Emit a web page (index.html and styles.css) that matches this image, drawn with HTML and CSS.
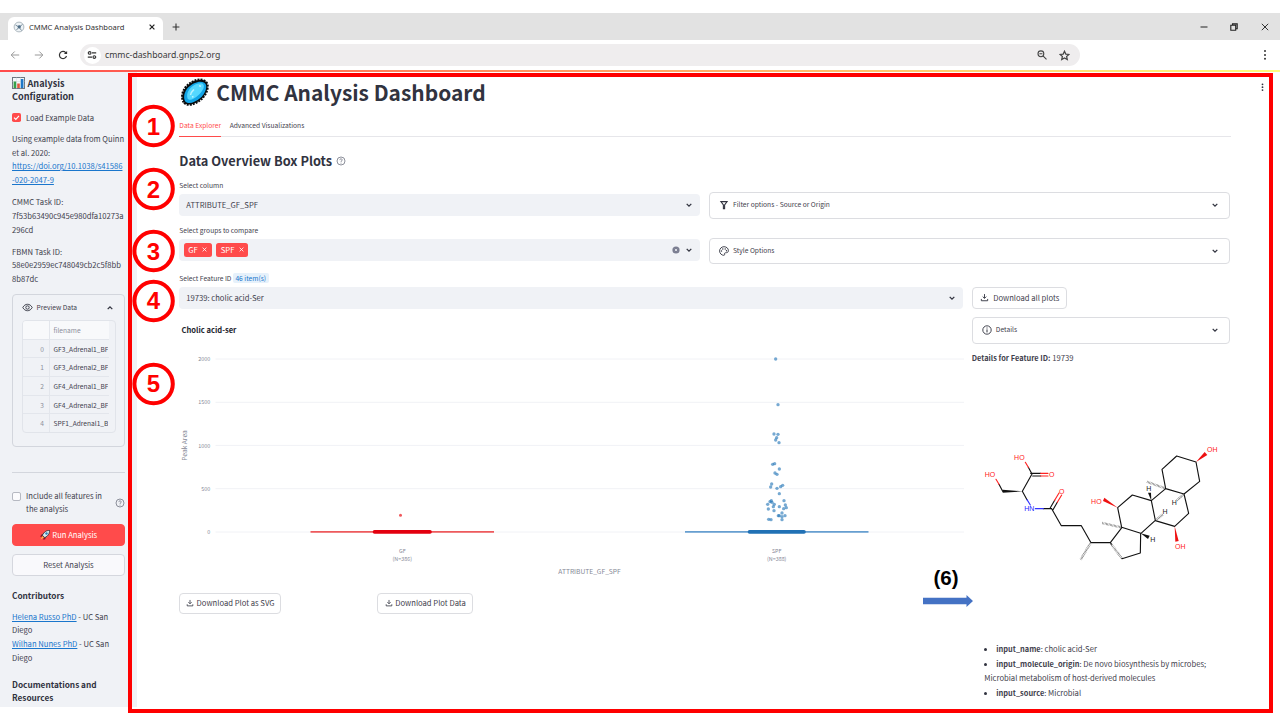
FILE: index.html
```html
<!DOCTYPE html>
<html lang="en">
<head>
<meta charset="utf-8">
<title>CMMC Analysis Dashboard</title>
<link rel="stylesheet" href="styles.css">
</head>
<body>
<svg class="defs" width="0" height="0">
  <symbol id="chev" viewBox="0 0 8 8"><path d="M1.7 2.9 4 5.2 6.3 2.9" fill="none" stroke="#31333f" stroke-width="1.3"/></symbol>
  <symbol id="dl" viewBox="0 0 10 10"><path d="M5 1.200v4.500M3 4 5 6l2-2M1.500 6.600v2h7v-2" fill="none" stroke="#31333f" stroke-width="1"/></symbol>
  <symbol id="help" viewBox="0 0 10 10"><circle cx="5" cy="5" r="4" fill="none" stroke="#808390" stroke-width=".9"/><path d="M3.8 4.1c0-1.7 2.5-1.6 2.4-.1C6.1 4.9 5 4.900 5 5.900M5 6.700v.9" fill="none" stroke="#808390" stroke-width=".9"/></symbol>
</svg>

<header class="tabstrip">
  <div class="tab">
    <svg class="favicon" width="12" height="12" viewBox="0 0 12 12"><circle cx="6" cy="6" r="4.900" fill="#eef3f6" stroke="#9fabb2" stroke-width=".8"/><circle cx="6.200" cy="5.800" r="1.600" fill="#2e5578"/><path d="M6 6 2.500 4M6 6l3.500-2.500M6 6l2.500 3.500M6 6 3.500 9" stroke="#60788a" stroke-width=".8"/></svg>
    <span class="tab-title">CMMC Analysis Dashboard</span>
    <svg class="tab-x" width="8" height="8" viewBox="0 0 8 8"><path d="m1.600 1.600 4.800 4.800m0-4.800L1.600 6.400" stroke="#222" stroke-width="1.200"/></svg>
  </div>
  <svg class="tab-new" width="8" height="8" viewBox="0 0 8 8"><path d="M4 .6v6.800M.6 4h6.800" stroke="#333" stroke-width="1.100"/></svg>
  <div class="win">
    <svg width="8" height="8" viewBox="0 0 8 8"><path d="M.5 4h7" stroke="#333" stroke-width="1.100"/></svg>
    <svg width="8" height="8" viewBox="0 0 8 8"><path d="M.8 2.300h4.900v4.900H.8zM2.500 2.200V.9h4.700v4.800H5.800" fill="none" stroke="#222" stroke-width="1.100"/></svg>
    <svg width="8" height="8" viewBox="0 0 8 8"><path d="m.8.8 6.400 6.400m0-6.400L.8 7.200" stroke="#333" stroke-width="1"/></svg>
  </div>
</header>
<div class="toolbar">
  <svg width="10" height="10" viewBox="0 0 10 10"><path d="M9.200 5H1.400M4.700 1.500 1.200 5l3.500 3.500" fill="none" stroke="#999" stroke-width="1"/></svg>
  <svg width="10" height="10" viewBox="0 0 10 10"><path d="M.8 5h7.800M5.300 1.500 8.800 5 5.300 8.500" fill="none" stroke="#999" stroke-width="1"/></svg>
  <svg width="10" height="10" viewBox="0 0 10 10"><path d="M8.500 6A3.600 3.600 0 1 1 7.700 2.600L8.600 3.500" fill="none" stroke="#333" stroke-width="1.200"/><path d="M9.100.9v3.200H5.900z" fill="#333"/></svg>
  <div class="url">
    <span class="site"><svg width="10" height="10" viewBox="0 0 10 10"><path d="M5 2.900h4.200M.8 7.100H5M.8 2.900h.5M8.700 7.100h.5" stroke="#333" stroke-width="1.200"/><circle cx="2.700" cy="2.900" r="1.300" fill="none" stroke="#333" stroke-width="1.100"/><circle cx="7.300" cy="7.100" r="1.300" fill="none" stroke="#333" stroke-width="1.100"/></svg></span>
    <span class="addr">cmmc-dashboard.gnps2.org</span>
    <svg class="mag" width="10" height="10" viewBox="0 0 10 10"><circle cx="3.900" cy="3.800" r="2.900" fill="none" stroke="#444" stroke-width="1.100"/><path d="M2.400 3.800h3M6 5.900l3.500 3.500" stroke="#444" stroke-width="1.100"/></svg>
    <svg width="11" height="11" viewBox="0 0 11 11"><path d="m5.500 1.200 1.300 2.900 3.200.3-2.400 2.100.7 3.100-2.800-1.600-2.800 1.600.7-3.100L1 4.400l3.200-.3z" fill="none" stroke="#444" stroke-width="1.200"/></svg>
  </div>
  <svg class="menu" width="4" height="12" viewBox="0 0 4 12"><circle cx="2" cy="2" r="1" fill="#333"/><circle cx="2" cy="5.900" r="1" fill="#333"/><circle cx="2" cy="9.800" r="1" fill="#333"/></svg>
</div>
<div class="rainbow"></div>

<div class="app">
  <aside class="side">
    <h3 class="conf"><svg width="13" height="12" viewBox="0 0 13 12"><rect x=".5" y=".5" width="12" height="11" fill="#f4f7f9" stroke="#6d7780"/><path d="M.5 4.500h12M.5 8h12M4.500.5v11M8.500.5v11" stroke="#cfd8dd" stroke-width=".5"/><path fill="#35a04a" d="M1.600 4.500h2.600V11H1.600z"/><path fill="#e2543c" d="M5.200 6.500h2.600V11H5.200z"/><path fill="#1e78c8" d="M8.800 2h2.600v9H8.800z"/></svg>Analysis<br>Configuration</h3>
    <label class="check"><svg width="9" height="9" viewBox="0 0 9 9"><rect width="9" height="9" rx="1.800" fill="#ff4b4b"/><path d="m2 4.600 1.800 1.700L7 2.900" fill="none" stroke="#fff" stroke-width="1.200"/></svg>Load Example Data</label>
    <p class="using">Using example data from Quinn<br>et al. 2020:<br><a>https://doi.org/10.1038/s41586<br>-020-2047-9</a></p>
    <p>CMMC Task ID:<br>7f53b63490c945e980dfa10273a<br>296cd</p>
    <p>FBMN Task ID:<br>58e0e2959ec748049cb2c5f8bb<br>8b87dc</p>
    <section class="preview">
      <div class="preview-head"><svg width="11" height="9" viewBox="0 0 11 9"><path d="M.8 4.500C3 .2 8 .2 10.200 4.500 8 8.800 3 8.800.8 4.500z" fill="none" stroke="#31333f" stroke-width=".9"/><circle cx="5.500" cy="4.500" r="1.700" fill="none" stroke="#31333f" stroke-width=".9"/></svg><span>Preview Data</span><svg class="up" width="8" height="8"><use href="#chev"/></svg></div>
      <div class="table">
        <div class="tr th"><b></b><i>filename</i></div>
        <div class="tr"><b>0</b><i>GF3_Adrenal1_BF</i></div>
        <div class="tr"><b>1</b><i>GF3_Adrenal2_BF</i></div>
        <div class="tr"><b>2</b><i>GF4_Adrenal1_BF</i></div>
        <div class="tr"><b>3</b><i>GF4_Adrenal2_BF</i></div>
        <div class="tr"><b>4</b><i>SPF1_Adrenal1_B</i></div>
      </div>
    </section>
    <hr>
    <div class="include"><span class="box"></span><span>Include all features in<br>the analysis</span><svg width="10" height="10"><use href="#help"/></svg></div>
    <button class="run"><svg width="10" height="10" viewBox="0 0 10 10"><path d="M3.200 4 1 4.800.3 7l2.200-.4zM5.800 6.800l-.5 2.400L3.300 9.800l.200-2.500z" fill="#8a1622"/><path d="M9.600.4C6.500.4 4.500 1.500 2.300 5.200L4.800 7.700C8.500 5.500 9.600 3.500 9.600.4z" fill="#dbe8ee" stroke="#1d2930" stroke-width=".8"/><circle cx="6.500" cy="3.500" r="1.200" fill="#2a83b8"/><path d="m2.600 6.200 1.200 1.200L.6 9.400z" fill="#ffc83d"/></svg>Run Analysis</button>
    <button class="reset">Reset Analysis</button>
    <h4>Contributors</h4>
    <p class="people"><a>Helena Russo PhD</a> - UC San<br>Diego<br><a>Wilhan Nunes PhD</a> - UC San<br>Diego</p>
    <h4 class="docs">Documentations and<br>Resources</h4>
  </aside>

  <main class="main">
    <h1><svg width="28" height="28" viewBox="0 0 28 28"><path d="M3 24.300C0 20 1 12.500 6.500 7.500S19.500 0 24.300 3.300c4.500 3.700 1.500 12.700-4 17.700S6.500 28.800 3 24.300z" fill="#0a0d0f" stroke="#0a0d0f" stroke-width="2.600" stroke-dasharray="1.900 1.100"/><path d="M4 23C2 19 3.500 13 7.700 9S19 2 23.300 4.700s1 10.800-4 15.300S6.500 27 4 23z" fill="#12a4e6"/><path d="M6.500 20.500C5 15.500 8 11 11.500 8.300S21 4 22.500 6.700 21 14 17 17.500 8.500 23.500 6.500 20.500z" fill="#55d8ff"/><path d="M9.500 17c0-2.500 2-4 3.500-5.500M18 7.800l2 .4M11 19l1.500-.5" stroke="#b9f2ff" stroke-width="1.500" fill="none"/></svg>CMMC Analysis Dashboard</h1>
    <nav class="tabs"><span class="on">Data Explorer</span><span>Advanced Visualizations</span></nav>
    <h2>Data Overview Box Plots<svg width="10" height="10"><use href="#help"/></svg></h2>

    <div class="halves">
      <div>
        <div class="label">Select column</div>
        <div class="select"><span>ATTRIBUTE_GF_SPF</span><svg width="8" height="8"><use href="#chev"/></svg></div>
        <div class="label second">Select groups to compare</div>
        <div class="select chips"><span class="chip">GF<svg width="5" height="5" viewBox="0 0 5 5"><path d="m.6.6 3.800 3.800m0-3.800L.6 4.400" stroke="#fff" stroke-width=".8"/></svg></span><span class="chip">SPF<svg width="5" height="5" viewBox="0 0 5 5"><path d="m.6.6 3.800 3.800m0-3.800L.6 4.400" stroke="#fff" stroke-width=".8"/></svg></span><svg class="clear" width="8" height="8" viewBox="0 0 8 8"><circle cx="4" cy="4" r="3.600" fill="#7b7e91"/><path d="m2.900 2.900 2.200 2.200m0-2.200L2.900 5.100" stroke="#f0f2f6" stroke-width=".8"/></svg><svg width="8" height="8"><use href="#chev"/></svg></div>
      </div>
      <div class="exps">
        <div class="exp"><svg width="10" height="10" viewBox="0 0 10 10"><path d="M1.900 1.600h6.200L5.600 5v3.600H4.400V5z" fill="none" stroke="#31333f" stroke-width="1.100"/></svg><span>Filter options - Source or Origin</span><svg class="end" width="8" height="8"><use href="#chev"/></svg></div>
        <div class="exp"><svg width="10" height="10" viewBox="0 0 10 10"><path d="M5 .7C2.500.7.6 2.600.6 5s2 4.300 4.200 4.300c1.300 0 .6-1.300.8-2 .3-1.200 3.800.4 3.800-2.700C9.400 2.300 7.400.7 5 .7z" fill="none" stroke="#31333f" stroke-width=".9"/><g fill="#31333f"><circle cx="2.500" cy="5" r=".7"/><circle cx="3.800" cy="3" r=".7"/><circle cx="6.200" cy="3" r=".7"/><circle cx="7.500" cy="4.800" r=".7"/></g></svg><span>Style Options</span><svg class="end" width="8" height="8"><use href="#chev"/></svg></div>
      </div>
    </div>

    <div class="label feature">Select Feature ID <em>46 item(s)</em></div>
    <div class="cols">
      <div class="left">
        <div class="select"><span>19739: cholic acid-Ser</span><svg width="8" height="8"><use href="#chev"/></svg></div>
        <svg class="chart" width="785" height="275" viewBox="179 315 785 275">
          <g stroke="#f1f2f6" stroke-width="1"><path d="M215.500 359H964M215.500 402.300H964M215.500 445.400H964M215.500 488.700H964M215.500 532H964"/></g>
          <text class="ct" x="181.500" y="333">Cholic acid-ser</text>
          <g class="ax" text-anchor="end"><text x="210.300" y="361.200">2000</text><text x="210.300" y="404.200">1500</text><text x="210.300" y="447.500">1000</text><text x="210.300" y="490.700">500</text><text x="210.300" y="534">0</text></g>
          <g class="ax" text-anchor="middle"><text x="402.300" y="552.700">GF</text><text x="402.300" y="560.800">(N=386)</text><text x="776.700" y="552.700">SPF</text><text x="776.700" y="560.800">(N=388)</text></g>
          <text class="at" text-anchor="middle" x="589.500" y="574.200">ATTRIBUTE_GF_SPF</text>
          <text class="at pk" text-anchor="middle" transform="translate(187 445.500) rotate(-90)">Peak Area</text>
          <path d="M310.500 531.900H494" stroke="#ee5a5c" stroke-width="1.700"/><path d="M374.500 531.900H430" stroke="#e3000f" stroke-width="3.600" stroke-linecap="round"/>
          <circle cx="400.500" cy="515.200" r="1.500" fill="#f0585c"/>
          <path d="M685 531.900H868.500" stroke="#679fd0" stroke-width="1.700"/><path d="M749.500 531.900H804" stroke="#2171b5" stroke-width="3.600" stroke-linecap="round"/>
          <g id="dots" transform="translate(640 340) scale(.33333)" fill="#2878b8" fill-opacity=".64"></g>
        </svg>
        <div class="dls"><button class="btn"><svg width="8" height="8"><use href="#dl"/></svg>Download Plot as SVG</button><button class="btn"><svg width="8" height="8"><use href="#dl"/></svg>Download Plot Data</button></div>
      </div>
      <div class="right">
        <button class="btn all"><svg width="9" height="9"><use href="#dl"/></svg>Download all plots</button>
        <div class="exp info"><svg width="10" height="10" viewBox="0 0 10 10"><circle cx="5" cy="5" r="4.200" fill="none" stroke="#31333f" stroke-width=".9"/><path d="M5 4.400v3M5 2.500v1" stroke="#31333f"/></svg><span>Details</span><svg class="end" width="8" height="8"><use href="#chev"/></svg></div>
        <div class="fid"><b>Details for Feature ID:</b> 19739</div>
        <svg class="mol" width="260" height="150" viewBox="0 0 780 450">
          <g fill="none" stroke="#111" stroke-width="3.400" stroke-linecap="round" stroke-linejoin="round">
            <path d="m157 184 29-52M182 130h30M188 138h24M186 132l-11-20M98 184l-11-21M157 184l14 25M220 236h25M241 233l13-22M249 239l13-22M245 236l29 51h60l29 51h58l35-46M421 338l35 48 55-17 1-59-57-18-12-59 44-38 57 17 12 59-43 39M544 212l43-36 55 16 14 58-42 39-58-17M587 176l-11-58 44-40 58 18 11 58-47 38"/>
            <g stroke="#f22"><path d="M212 130h22M212 138h22M175 112l-9-15M87 163l-9-15M254 211l13-22M262 217l13-22"/></g>
            <path d="m171 209 10 16M196 236h24" stroke="#33f"/>
          </g>
          <path d="M425 344l30 40" stroke="#fff" stroke-width="8"/>
          <g fill="#111"><path d="M157 184l-59-5v9z"/><path d="M544 212l-10-24h9z"/><path d="m512 310 27 7-5 10z"/></g>
          <g fill="#e11"><path d="m443 233-44-20 4-10z"/><path d="m678 96 26-30 8 9z"/><path d="m614 289 2 46 10-2z"/></g>
          <g fill="none" stroke="#555" stroke-width="7" stroke-dasharray="1.500 2.500"><path d="M361 340 332 389M423 342l32 42M453 292l-56-13M585 175l-55-20M640 194l-20 18M558 270l20-16"/></g>
          <g class="atom"><g fill="#f22"><text x="148" y="90">HO</text><text x="60" y="141">HO</text><text x="245" y="142">O</text><text x="275" y="193">O</text><text x="379" y="223">HO</text><text x="727" y="66">OH</text><text x="631" y="356">OH</text></g><text x="178" y="243" fill="#22f">HN</text><g fill="#222"><text x="536" y="184">H</text><text x="585" y="253">H</text><text x="613" y="226">H</text><text x="548" y="335">H</text></g></g>
        </svg>
        <ul class="facts"><li><b>input_name</b>: cholic acid-Ser</li><li><b>input_molecule_origin</b>: De novo biosynthesis by microbes;<br>Microbial metabolism of host-derived molecules</li><li><b>input_source</b>: Microbial</li></ul>
      </div>
    </div>
  </main>
</div>

<svg class="notes" width="1280" height="720" viewBox="0 0 1280 720">
  <g fill="#31333f"><circle cx="1262.500" cy="84.300" r=".9"/><circle cx="1262.500" cy="87.200" r=".9"/><circle cx="1262.500" cy="90.100" r=".9"/></g>
  <rect x="130" y="75" width="1141" height="636" fill="none" stroke="#f00" stroke-width="4"/>
  <g fill="#fff" stroke="#f00" stroke-width="4"><circle cx="153.600" cy="126" r="19.200"/><circle cx="153.600" cy="189" r="19.200"/><circle cx="153.600" cy="251" r="19.200"/><circle cx="153.600" cy="301" r="19.200"/><circle cx="153.600" cy="384" r="19.200"/></g>
  <g class="num" fill="#f00"><text x="153.500" y="134.800">1</text><text x="153.500" y="197.700">2</text><text x="153.500" y="259.500">3</text><text x="153.500" y="309">4</text><text x="153.500" y="392">5</text></g>
  <text class="six" x="946" y="584.500">(6)</text>
  <path d="M923 597.700h43.500V595l6.500 6-6.500 6v-2.700H923z" fill="#4472c4"/>
</svg>
<script src="dots.js"></script>
</body>
</html>
```
FILE: styles.css
```css
*{box-sizing:border-box}
body{margin:0;width:1280px;height:720px;overflow:hidden;background:#fff;padding-top:13px;color:#3f414d;font:400 7.65px/13.7px "Noto Sans CJK JP","Noto Sans",sans-serif}
svg{display:block;flex:none}
.defs{position:absolute}
h1,h2,h3,h4,p,ul{margin:0;padding:0}
h1,h2,h3,h4{color:#31333f}
button{font:inherit;color:inherit;padding:0;display:flex;align-items:center;justify-content:center}
a{color:#1a76cc;text-decoration:underline}

.tabstrip{height:27px;background:#e2e2e2;display:flex;align-items:center}
.tab{align-self:flex-end;margin-left:8px;width:155px;height:23px;background:#fff;border-radius:6px 6px 0 0;display:flex;align-items:center;padding:0 0 4px 5px}
.tab-title{margin-left:4px;width:118.500px;font:400 7.600px/12px "Noto Sans",sans-serif;color:#333}
.tab-new{margin-left:9px}
.win{margin-left:auto;display:flex;gap:22.500px;padding-right:11.500px}
.toolbar{height:30px;background:#fff;display:flex;align-items:center;padding-left:9.500px;gap:14px}
.url{width:1000px;height:22px;border-radius:11px;background:#efedee;display:flex;align-items:center;margin-left:-2px;padding-left:2.500px}
.site{width:17px;height:17px;border-radius:50%;background:#fff;display:grid;place-items:center;margin-left:1.500px}
.addr{margin-left:4.500px;font:400 8.700px/14px "Noto Sans",sans-serif;color:#3a3a3a}
.mag{margin-left:auto;margin-right:11.500px}
.url svg:last-child{margin-right:10px}
.site svg:last-child{margin-right:0}
.menu{margin-left:auto;margin-right:13px}
.rainbow{height:2px;background:linear-gradient(90deg,#ff4b4b,#fffd80)}

.app{display:flex;height:635px}
.side{width:137px;background:#f0f2f6;padding:5.300px 12.500px 0 12px;overflow:hidden;white-space:nowrap}
.conf{font-size:9.120px;line-height:12.700px;font-weight:700}
.conf svg{display:inline-block;vertical-align:-2px;margin-right:2.500px}
.check{display:flex;align-items:center;gap:5px;height:14px;margin-top:8px}
.side p{margin-bottom:8.400px}
.side .using{margin-top:7.300px}
.preview{border:1px solid #d3d6dd;border-radius:4px;height:153px;margin-top:7.700px;padding:0 8.500px}
.preview-head{display:flex;align-items:center;height:25px;font-size:6.670px}
.preview-head span{margin-left:4px}
.up{margin-left:auto;transform:rotate(180deg);margin-right:1px}
.table{border:1px solid #e1e4ea;border-radius:4px;height:113px;width:94px;overflow:hidden;padding-right:5.500px}
.tr{display:flex;height:18.650px;line-height:18px;font-size:6.630px;border-bottom:1px solid #e3e6ec}
.tr:last-child{border-bottom:0}
.tr b{width:27px;border-right:1px solid #e3e6ec;font-weight:400;text-align:right;padding-right:4.500px;color:#8c8f9b}
.tr i{font-style:normal;padding-left:4px;overflow:hidden}
.th{background:#f8f9fb}.th i{color:#8c8f9b}
hr{border:0;border-top:1px solid #d3d6dd;margin:25px 0 0}
.include{display:flex;margin-top:17px;line-height:12.700px;height:26px}
.box{width:9px;height:9px;border:1px solid #b6b9c2;border-radius:2px;background:#fbfbfd;margin:2px 5px 0 0}
.include svg{margin:7.500px 0 0 auto}
.run,.reset{width:113px;height:22px;border-radius:4px;margin-top:8px}
.run{background:#ff4b4b;color:#fff;border:1px solid #ff4b4b;gap:2.500px;margin-top:7.700px}
.reset{background:#f9f9fc;border:1px solid #d5d7de}
h4{font-size:8.260px;line-height:12.300px;font-weight:700;margin-top:13.300px}
.side .people{margin:8.300px 0 0}
h4.docs{margin-top:13.700px}

.main{width:1094px;padding-left:42.300px}
h1{display:flex;align-items:center;font-size:20.910px;line-height:28px;font-weight:700;margin-top:5.500px;gap:7.500px;padding-left:1.500px;height:28px}
.tabs{display:flex;gap:8.500px;height:18px;margin-top:13.500px;border-bottom:1px solid #e6e6ea;font-size:6.690px;line-height:13px;width:1052px}
.tabs span{height:18px}
.tabs .on{color:#ff4b4b;border-bottom:1.500px solid #ff4b4b}
h2{font-size:12.780px;line-height:18px;font-weight:700;display:flex;align-items:center;gap:4px;margin-top:14.500px}
.halves{display:grid;grid-template-columns:521px 521px;gap:9.200px;margin-top:9px}
.label{font-size:6.660px;line-height:13px;height:15.500px}
.label.second{margin-top:8px}
.select{height:21.500px;background:#f0f2f6;border-radius:4px;display:flex;align-items:center;padding:0 7px}
.select>svg:last-child{margin-left:auto}
.select .clear{margin-left:auto}
.select .clear+svg:last-child{margin-left:5px}
.chips{padding-left:4.500px;gap:0}
.chip{height:14.500px;background:#ff4b4b;color:#fff;border-radius:2.500px;display:flex;align-items:center;gap:4.500px;padding:0 4.500px;margin-right:4.500px}
.exps{display:flex;flex-direction:column;gap:19px;padding-top:13.500px}
.exp{height:26.500px;border:1px solid #dcdde1;border-radius:4px;display:flex;align-items:center;font-size:6.690px;padding:0 10px 0 8.500px}
.exp span{margin-left:4px}
.end{margin-left:auto}
.feature{margin-top:7.500px}
.label em{font-style:normal;color:#1a76cc;background:#e6f1fb;border-radius:2px;padding:0 2.500px}
.cols{display:grid;grid-template-columns:784px 258.700px;gap:8.500px}
.chart{margin-top:6px;margin-left:-.8px}
.ct{font-size:7.590px;font-weight:700;fill:#22242e}
.ax{font-size:5.400px;fill:#858896}
.at{font-size:6.670px;fill:#858896}
.dls{display:flex;margin-top:3px;gap:96px}
.btn{height:21.500px;width:102px;background:#fff;border:1px solid #dcdde1;border-radius:4px;gap:2.500px}
.dls .btn+.btn{width:96px}
.btn.all{width:95.500px;gap:4.500px}
.info{margin-top:8.500px;padding-left:9px}
.fid{margin-top:7.500px}
.fid b,.facts b{font-size:7.420px}
.mol{margin:65px 0 0 -2px}
.atom text{font:400 21px "Liberation Sans",Arial,sans-serif;text-anchor:middle}
.facts{list-style:none;padding-left:12.500px;margin-top:62.700px;white-space:nowrap;line-height:14px}
.facts li{margin-bottom:1px}
.facts li::before{content:"";display:inline-block;width:3px;height:3px;border-radius:50%;background:#31333f;margin-right:9px;vertical-align:1.500px}
.notes{position:absolute;left:0;top:0}
.num text,.six{font:700 24px "Liberation Sans",Arial,sans-serif;text-anchor:middle}
.six{font-size:20.500px}
```
FILE: dots.js
```js
// Jittered sample points of the SPF group, x and y pairs.
const points = [
  [407,57],[414,194],[402,282],[414,283],[410,293],[407,300],[417,308],
  [398,373],[404,371],[418,387],[405,399],[411,403],[395,432],[392,441],
  [411,445],[422,440],[428,436],[418,461],[390,485],[394,482],[396,487],
  [432,482],[383,493],[403,493],[400,500],[418,500],[436,495],[439,503],
  [385,507],[402,512],[431,506],[426,519],[415,527],[418,527],[435,527],
  [426,530],[426,539],[386,538],[393,539]
];
const group = document.getElementById('dots');
for (const [x, y] of points) {
  const c = document.createElementNS('http://www.w3.org/2000/svg', 'circle');
  c.setAttribute('cx', x);
  c.setAttribute('cy', y);
  c.setAttribute('r', 5);
  group.append(c);
}
```
